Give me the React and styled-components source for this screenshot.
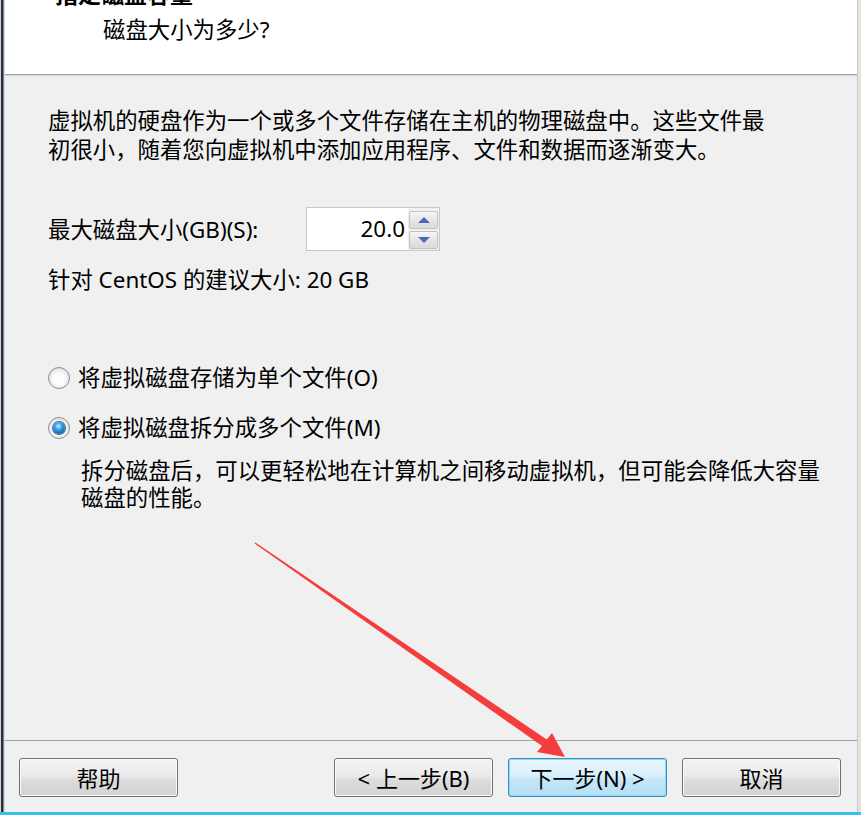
import styled, { createGlobalStyle, css } from "styled-components";

const GlobalStyle = createGlobalStyle`
  html, body {
    margin: 0;
    padding: 0;
    background: #f0f0f0;
  }
  body {
    font-family: "Noto Sans", "Noto Sans CJK SC", sans-serif;
    color: #000;
  }
  #root {
    width: 861px;
    height: 815px;
    overflow: hidden;
  }
`;

const Window = styled.div`
  position: relative;
  width: 861px;
  height: 815px;
  display: flex;
  flex-direction: column;
`;

const Frame = styled.div`
  flex: 1;
  display: flex;
  min-height: 0;
`;

const LeftEdge = styled.div`
  width: 5px;
  background: linear-gradient(
    to right,
    #d6d6d6 0 1px,
    #2e2e2e 1px 3px,
    #7f8b96 3px 4px,
    #c6dcf1 4px 5px
  );
`;

const RightEdge = styled.div`
  width: 4px;
  background: linear-gradient(to right, #b7cde3 0 1px, #ebe2d2 1px);
`;

const BottomBar = styled.div`
  height: 3px;
  background: #33c5e9;
`;

const Dialog = styled.div`
  flex: 1;
  display: flex;
  flex-direction: column;
  background: #f0f0f0;
  min-width: 0;
`;

const Header = styled.div`
  height: 74px;
  background: #fff;
  overflow: hidden;
`;

const HeaderRule = styled.div`
  height: 2px;
  background: linear-gradient(#a3a3a3 50%, #d4d4d4 50%);
`;

const Title = styled.div`
  margin-top: -20px;
  padding-left: 50px;
  font-size: 23px;
  font-weight: bold;
  line-height: 29px;
`;

const Subtitle = styled.div`
  margin-top: 6px;
  padding-left: 98px;
  font-size: 22.4px;
  line-height: 29px;
`;

const Body = styled.div`
  flex: 1;
  padding: 30px 0 0 43px;
  font-size: 22.4px;
`;

const Text = styled.div`
  line-height: ${(p) => p.$lh || 29}px;
  margin-top: ${(p) => p.$mt || 0}px;
  margin-left: ${(p) => p.$ml || 0}px;
  white-space: nowrap;
`;

const SizeRow = styled.div`
  display: flex;
  align-items: center;
  margin-top: 43px;
`;

const SizeLabel = styled.div`
  width: 258px;
  line-height: 29px;
`;

const SpinBox = styled.div`
  display: flex;
  box-sizing: border-box;
  width: 134px;
  height: 44px;
  border: 1px solid #c4c7cc;
  background: #f0f0f0;
`;

const SpinValue = styled.div`
  width: 101px;
  background: #fff;
  text-align: right;
  padding-right: 3px;
  box-sizing: border-box;
  line-height: 42px;
`;

const SpinButtons = styled.div`
  flex: 1;
  display: flex;
  flex-direction: column;
  gap: 2px;
  padding: 3px 1px 1px 1px;
`;

const SpinButton = styled.div`
  flex: 1;
  display: flex;
  align-items: center;
  justify-content: center;
  border: 1px solid #c2c2c2;
  border-radius: 2px;
  background: linear-gradient(#f7f7f7, #e6e6e6 50%, #dadada);
`;

const Triangle = styled.span`
  width: 0;
  height: 0;
  border-left: 6px solid transparent;
  border-right: 6px solid transparent;
  ${(p) =>
    p.$down
      ? css`border-top: 6px solid #4a68b8;`
      : css`border-bottom: 6px solid #4a68b8;`}
`;

const RadioRow = styled.div`
  display: flex;
  align-items: center;
  gap: 8px;
  line-height: 29px;
  margin-top: ${(p) => p.$mt}px;
`;

const RadioMark = styled.span`
  position: relative;
  width: 22px;
  height: 22px;
  box-sizing: border-box;
  border-radius: 50%;
  border: 1px solid #8d8f92;
  background: radial-gradient(circle at 50% 55%, #fdfdfd 0 35%, #e4e4e4 70%, #cfcfcf 100%);
  ${(p) =>
    p.$checked &&
    css`
      &::after {
        content: "";
        position: absolute;
        left: 4px;
        top: 4px;
        width: 12px;
        height: 12px;
        border-radius: 50%;
        background: radial-gradient(circle at 45% 35%, #c9f0ff 0, #3aa0e6 35%, #0f5fa8 75%, #0a3f78 100%);
        box-shadow: 0 0 0 1px #3c6d9c;
      }
    `}
`;

const Footer = styled.div`
  flex: 0 0 72px;
  box-sizing: border-box;
  border-top: 1px solid #a0a0a0;
  display: flex;
  align-items: flex-start;
  padding: 17px 16px 0 14px;
`;

const ButtonGroup = styled.div`
  margin-left: auto;
  display: flex;
  gap: 15px;
`;

const Button = styled.button`
  width: 159px;
  height: 39px;
  box-sizing: border-box;
  padding: 0;
  border: 1px solid #707070;
  border-radius: 3px;
  background: linear-gradient(#f4f4f4 0%, #ebebeb 45%, #dddddd 55%, #d2d2d2 100%);
  box-shadow: inset 0 0 0 1px #fbfbfb;
  font-family: inherit;
  font-size: 22px;
  line-height: 36px;
  color: #000;
  ${(p) =>
    p.$default &&
    css`
      border-color: #3c8ccc;
      background: linear-gradient(#e8f6fd 0%, #d9f0fc 45%, #c4e6f8 55%, #b6def4 100%);
      box-shadow: inset 0 0 0 1px #8fd6f5;
    `}
`;

const Arrow = styled.svg`
  position: absolute;
  left: 0;
  top: 0;
  pointer-events: none;
`;

export default function App() {
  return (
    <>
      <GlobalStyle />
      <Window>
        <Frame>
          <LeftEdge />
          <Dialog>
            <Header>
              <Title>指定磁盘容量</Title>
              <Subtitle>磁盘大小为多少?</Subtitle>
            </Header>
            <HeaderRule />
            <Body>
              <Text>虚拟机的硬盘作为一个或多个文件存储在主机的物理磁盘中。这些文件最</Text>
              <Text>初很小，随着您向虚拟机中添加应用程序、文件和数据而逐渐变大。</Text>

              <SizeRow>
                <SizeLabel>最大磁盘大小(GB)(S):</SizeLabel>
                <SpinBox>
                  <SpinValue>20.0</SpinValue>
                  <SpinButtons>
                    <SpinButton>
                      <Triangle />
                    </SpinButton>
                    <SpinButton>
                      <Triangle $down />
                    </SpinButton>
                  </SpinButtons>
                </SpinBox>
              </SizeRow>
              <Text $mt={14}>针对 CentOS 的建议大小: 20 GB</Text>

              <RadioRow $mt={69}>
                <RadioMark />
                <span>将虚拟磁盘存储为单个文件(O)</span>
              </RadioRow>
              <RadioRow $mt={21}>
                <RadioMark $checked />
                <span>将虚拟磁盘拆分成多个文件(M)</span>
              </RadioRow>
              <Text $mt={15} $ml={33} $lh={27}>
                拆分磁盘后，可以更轻松地在计算机之间移动虚拟机，但可能会降低大容量
              </Text>
              <Text $ml={33} $lh={27}>
                磁盘的性能。
              </Text>
            </Body>
            <Footer>
              <Button>帮助</Button>
              <ButtonGroup>
                <Button>&lt; 上一步(B)</Button>
                <Button $default>下一步(N) &gt;</Button>
                <Button>取消</Button>
              </ButtonGroup>
            </Footer>
          </Dialog>
          <RightEdge />
        </Frame>
        <BottomBar />
        <Arrow width="861" height="815" viewBox="0 0 861 815">
          <polygon
            points="254.6,543.4 542.1,746.1 537,752 565,757 552,733 546.7,739.5 255.4,542.6"
            fill="#f63d3d"
          />
        </Arrow>
      </Window>
    </>
  );
}
